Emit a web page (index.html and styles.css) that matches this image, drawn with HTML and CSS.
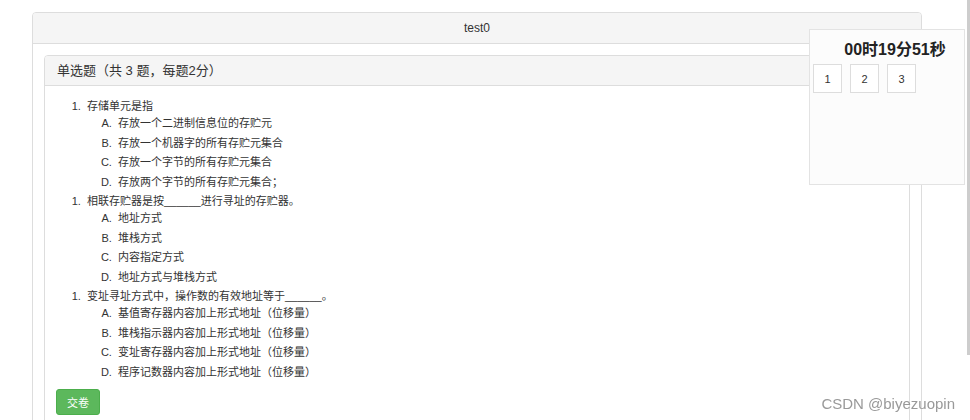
FILE: index.html
```
<!DOCTYPE html>
<html lang="zh-CN">
<head>
    <meta charset="UTF-8">
    <title>test0</title>
    <link rel="stylesheet" href="styles.css">
</head>
<body>
    <div class="panel exam">
        <div class="panel-heading exam-title">test0</div>
        <div class="panel-body exam-body">
            <div class="panel section">
                <div class="panel-heading section-title">单选题（共 3 题，每题2分）</div>
                <div class="panel-body section-body">
                    <ol class="question">
                        <li>存储单元是指
                            <ol class="options">
                                <li>存放一个二进制信息位的存贮元</li>
                                <li>存放一个机器字的所有存贮元集合</li>
                                <li>存放一个字节的所有存贮元集合</li>
                                <li>存放两个字节的所有存贮元集合；</li>
                            </ol>
                        </li>
                    </ol>
                    <ol class="question">
                        <li>相联存贮器是按______进行寻址的存贮器。
                            <ol class="options">
                                <li>地址方式</li>
                                <li>堆栈方式</li>
                                <li>内容指定方式</li>
                                <li>地址方式与堆栈方式</li>
                            </ol>
                        </li>
                    </ol>
                    <ol class="question">
                        <li>变址寻址方式中，操作数的有效地址等于______。
                            <ol class="options">
                                <li>基值寄存器内容加上形式地址（位移量）</li>
                                <li>堆栈指示器内容加上形式地址（位移量）</li>
                                <li>变址寄存器内容加上形式地址（位移量）</li>
                                <li>程序记数器内容加上形式地址（位移量）</li>
                            </ol>
                        </li>
                    </ol>
                    <button class="btn-submit">交卷</button>
                </div>
            </div>
        </div>
    </div>

    <!-- floating timer -->
    <div class="timer-box">
        <h3 class="timer">00时19分51秒</h3>
        <div class="jump">
            <button>1</button>
            <button>2</button>
            <button>3</button>
        </div>
    </div>

    <div class="scroll-thumb"></div>
    <div class="watermark">CSDN @biyezuopin</div>
</body>
</html>
```

FILE: styles.css
```
html, body {
    overflow: hidden;
}
body {
    margin: 0;
    font-family: "Liberation Sans", "Noto Sans CJK SC", sans-serif;
    color: #333;
    background-color: #fff;
}
.panel {
    border: 1px solid #ddd;
    border-radius: 4px;
    background-color: #fff;
}
.panel-heading {
    background-color: #f5f5f5;
    border-bottom: 1px solid #ddd;
    border-radius: 3px 3px 0 0;
}
.exam {
    width: 888px;
    margin: 12px 0 0 32px;
}
.exam-title {
    height: 30px;
    line-height: 30px;
    text-align: center;
    font-size: 12px;
}
.exam-body {
    padding: 11px;
}
.section-title {
    height: 29px;
    line-height: 29px;
    padding-left: 12px;
    font-size: 13px;
}
.section-body {
    padding: 12px 11px 12px 11px;
    font-size: 11px;
}
.question {
    margin: 0;
    padding-left: 31px;
    line-height: 17px;
}
.question > li::marker {
    content: counter(list-item) ".\00a0\00a0";
}
.options {
    margin: 0;
    padding-left: 31px;
    list-style-type: upper-alpha;
}
.options li {
    line-height: 16px;
    margin-bottom: 3.5px;
}
.options > li::marker {
    content: counter(list-item, upper-alpha) ".\00a0\00a0";
}
.btn-submit {
    display: block;
    margin-top: 9px;
    height: 26px;
    padding: 0 10px;
    border: 1px solid #4cae4c;
    border-radius: 3px;
    background-color: #5cb85c;
    color: #fff;
    font-family: inherit;
    font-size: 11px;
}
.timer-box {
    position: fixed;
    left: 809px;
    top: 29px;
    width: 154px;
    height: 154px;
    border: 1px solid #e3e3e3;
    background-color: #fcfcfc;
}
.timer {
    margin: 0;
    padding: 9px 0 0 16px;
    line-height: 22px;
    text-align: center;
    font-size: 16px;
    font-weight: bold;
    color: #222;
}
.jump {
    display: flex;
    gap: 8px;
    margin: 3px 0 0 3px;
}
.jump button {
    width: 29px;
    height: 29px;
    padding: 0;
    border: 1px solid #ddd;
    background-color: #fff;
    color: #333;
    font-family: inherit;
    font-size: 11px;
}
.scroll-thumb {
    position: fixed;
    right: 0;
    top: 0;
    width: 3px;
    height: 355px;
    background-color: #cdcdcd;
}
.watermark {
    position: fixed;
    right: 15px;
    bottom: 8px;
    font-size: 15px;
    color: #999;
}
```
